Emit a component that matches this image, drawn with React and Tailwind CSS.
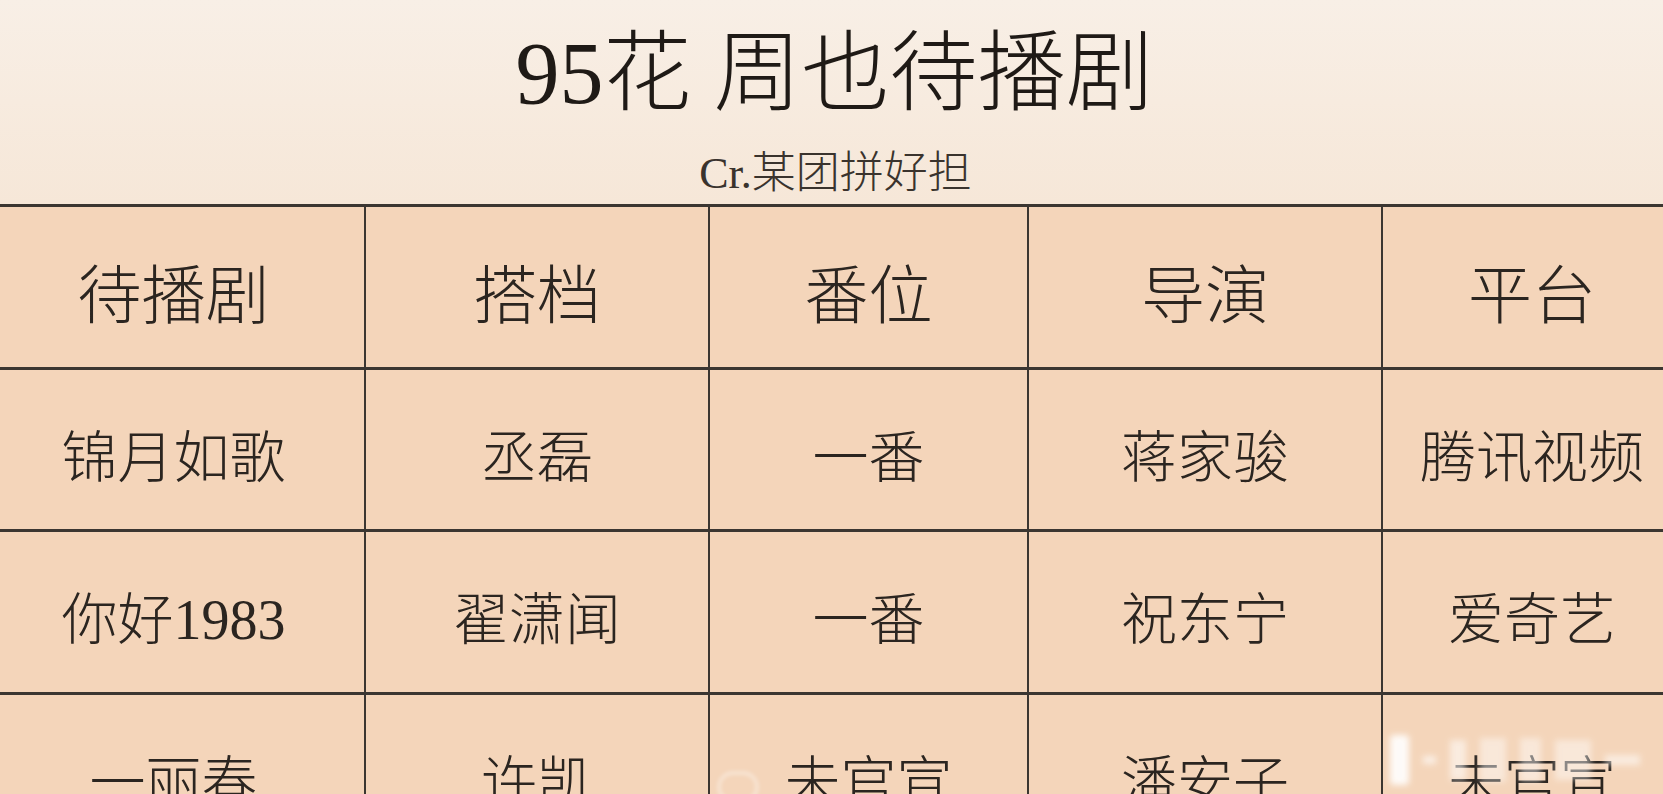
import React from "react";

const font = { fontFamily: '"Liberation Serif", "Noto Sans CJK SC", serif' };

const rows = [
  ["锦月如歌", "丞磊", "一番", "蒋家骏", "腾讯视频"],
  ["你好1983", "翟潇闻", "一番", "祝东宁", "爱奇艺"],
  ["一丽春", "许凯", "未官宣", "潘安子", "未官宣"],
];

const head = ["待播剧", "搭档", "番位", "导演", "平台"];
const widths = ["w-[381px]", "w-[344px]", "w-[319px]", "w-[354px]", "w-[300px]"];

function Row({ cells, h, big }) {
  return (
    <div className={`flex shrink-0 ${h} border-b-[3px] border-[#3b3631]`}>
      {cells.map((c, i) => (
        <div
          key={i}
          className={`${widths[i]} shrink-0 flex items-center justify-center ${i > 0 ? "border-l-2 border-[#3b3631]" : ""} bg-[#f4d5ba]`}
        >
          <span
            className={`${big ? "text-[64px] pt-[20px]" : "text-[56px] pt-[16px]"} leading-none text-[#2b2520] font-light whitespace-nowrap`}
          >
            {c}
          </span>
        </div>
      ))}
    </div>
  );
}

export default function App() {
  return (
    <div className="relative w-[1663px] h-[794px] overflow-hidden bg-[#f5d5ba]" style={font}>
      <div className="h-[204px] flex flex-col items-center bg-gradient-to-b from-[#f8efe6] to-[#f6e7d8]">
        <div className="mt-[30px] text-[88px] leading-none text-[#1f1a16] font-light pl-[6px]">
          95花 周也待播剧
        </div>
        <div className="mt-[34px] text-[44px] leading-none text-[#3a332d] font-light pl-[8px]">
          Cr.某团拼好担
        </div>
      </div>
      <div className="ml-[-17px] flex flex-col border-t-[3px] border-[#3b3631]">
        <Row cells={head} h="h-[163px]" big />
        <Row cells={rows[0]} h="h-[162px]" />
        <Row cells={rows[1]} h="h-[163px]" />
        <Row cells={rows[2]} h="h-[163px]" />
      </div>
      {/* blurred watermark */}
      <div className="absolute left-[1390px] top-[730px] w-[250px] h-[60px] flex items-center gap-[14px] blur-[3px] opacity-90">
        <div className="w-[22px] h-[50px] bg-white rounded-sm" />
        <div className="w-[14px] h-[8px] bg-white/70" />
        <div className="w-[18px] h-[40px] bg-white/60" />
        <div className="w-[30px] h-[44px] bg-white/50" />
        <div className="w-[24px] h-[44px] bg-white/50" />
        <div className="w-[40px] h-[40px] bg-white/50" />
        <div className="w-[40px] h-[10px] bg-white/60" />
      </div>
      <div className="absolute left-[718px] top-[772px] w-[40px] h-[30px] rounded-full border-2 border-white/70 blur-[2px]" />
    </div>
  );
}
